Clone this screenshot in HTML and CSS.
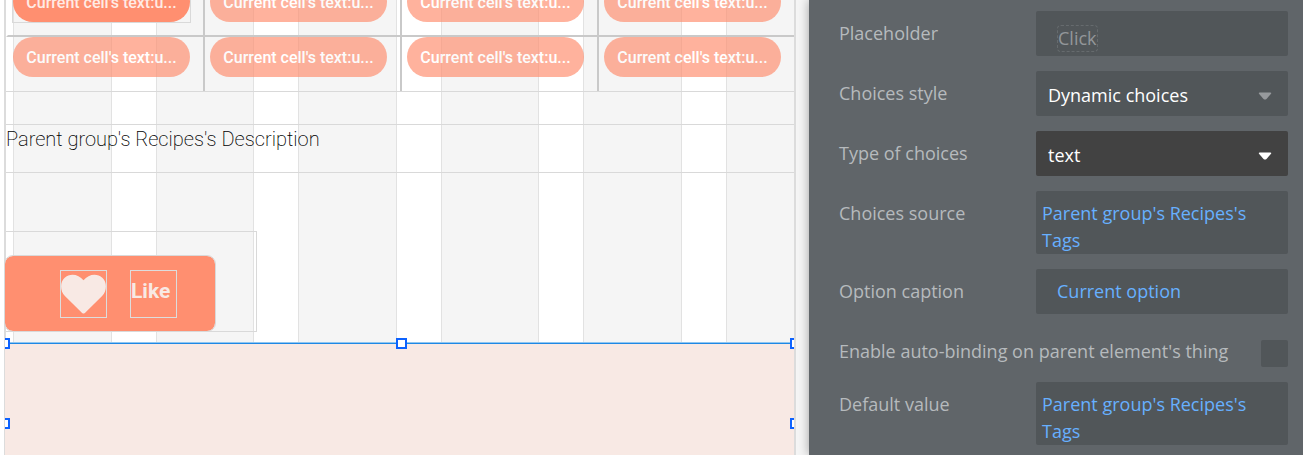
FILE: index.html
```html
<!DOCTYPE html>
<html lang="en">
<head>
<meta charset="utf-8">
<title>Editor</title>
<link rel="stylesheet" href="styles.css">
</head>
<body>
<div class="editor">
  <main class="canvas">
    <div class="columns"><i></i><i></i><i></i><i></i><i></i><i></i></div>
    <div class="artboard">
      <div class="cells">
        <div class="cell"><span class="pill pill-active">Current cell's text:u...</span></div>
        <div class="cell"><span class="pill">Current cell's text:u...</span></div>
        <div class="cell"><span class="pill">Current cell's text:u...</span></div>
        <div class="cell"><span class="pill">Current cell's text:u...</span></div>
        <div class="cell"><span class="pill">Current cell's text:u...</span></div>
        <div class="cell"><span class="pill">Current cell's text:u...</span></div>
        <div class="cell"><span class="pill">Current cell's text:u...</span></div>
        <div class="cell"><span class="pill">Current cell's text:u...</span></div>
      </div>
      <p class="description">Parent group's Recipes's Description</p>
      <div class="like-group">
        <button class="like" type="button">
          <span class="like-box"><svg viewBox="0 0 46 46" aria-hidden="true"><path d="M23 43.500C22 43.500 21.400 42.800 20.800 42.200L4 25.500C-1 20.500-1.200 11.500 3.500 7.200C9.500 1.700 18 3.500 23 9.500C28 3.500 36.500 1.700 42.500 7.200C47.200 11.500 47 20.500 42 25.500L25.200 42.200C24.600 42.800 24 43.500 23 43.500Z"/></svg></span>
          <span class="like-box">Like</span>
        </button>
      </div>
      <section class="selected">
        <i class="handle top left"></i><i class="handle top center"></i><i class="handle top right"></i>
        <i class="handle middle left"></i><i class="handle middle right"></i>
      </section>
    </div>
  </main>
  <aside class="panel">
    <div class="row"><label for="placeholder">Placeholder</label><button id="placeholder" class="field indented" type="button"><span class="hint">Click</span></button></div>
    <div class="row"><label for="style">Choices style</label>
      <div class="picker"><select id="style" class="field"><option>Dynamic choices</option></select><svg viewBox="0 0 14 8" aria-hidden="true"><path d="M1.500.5h11q1.200.3.500 1.300L8.500 7Q7 8 5.500 7L1 1.800Q.3.800 1.500.5z"/></svg></div></div>
    <div class="row"><label for="type">Type of choices</label>
      <div class="picker picker-active"><select id="type" class="field"><option>text</option></select><svg viewBox="0 0 14 8" aria-hidden="true"><path d="M1.500.5h11q1.200.3.500 1.300L8.500 7Q7 8 5.500 7L1 1.800Q.3.800 1.500.5z"/></svg></div></div>
    <div class="row"><label for="source">Choices source</label><button id="source" class="field expression" type="button">Parent group's Recipes's Tags</button></div>
    <div class="row"><label for="caption">Option caption</label><button id="caption" class="field expression single" type="button">Current option</button></div>
    <div class="row row-check"><label for="binding">Enable auto-binding on parent element's thing</label><input id="binding" class="check" type="checkbox"></div>
    <div class="row"><label for="default">Default value</label><button id="default" class="field expression" type="button">Parent group's Recipes's Tags</button></div>
  </aside>
</div>
</body>
</html>
```
FILE: styles.css
```css
* { box-sizing: border-box; }
body { margin: 0; overflow: hidden; }
.editor { display: flex; height: 100vh; overflow: hidden; }

.canvas {
  position: relative;
  flex: 1;
  min-width: 0;
  display: flex;
  overflow: hidden;
  padding: 0 13px 0 4px;
  background: #fff;
  font-family: Roboto, sans-serif;
}
.columns {
  position: absolute;
  inset: 0 -15px 0 13px;
  display: grid;
  grid-template-columns: repeat(6, 1fr);
  gap: 44px;
}
.columns i { background: #f5f5f5; border: solid #e2e2e2; border-width: 0 1px; }
.artboard {
  position: relative;
  flex: 1;
  min-width: 0;
  display: flex;
  flex-direction: column;
  border: solid #dcdcdc;
  border-width: 0 2px;
}
.cells {
  display: grid;
  grid-template-columns: repeat(4, 1fr);
  margin-top: -18px;
  border-bottom: 1px solid #d9d9d9;
}
.cell { height: 55px; padding: 0 13px 0 5px; border-left: 2px solid #c9c9c9; border-bottom: 2px solid #c9c9c9; }
.cell:nth-child(4n + 1) { border-left-color: transparent; }
.cell:nth-child(n + 5) { height: 54px; border-bottom: 0; }
.pill {
  display: block;
  height: 40px;
  border-radius: 20px;
  background: #ff8f70;
  color: #fff;
  font-size: 16px;
  font-weight: 500;
  line-height: 42px;
  text-align: center;
  white-space: nowrap;
  opacity: .68;
}
.pill-active { opacity: 1; color: #ffebe5; }
.cell:first-child { position: relative; }
.cell:first-child::after {
  content: "";
  position: absolute;
  inset: 0 12px 12px 4px;
  border: 1px solid #d9d9d9;
}
.description {
  height: 49px;
  margin: 32px 0 58px;
  border: solid #d9d9d9;
  border-width: 1px 0;
  color: #000;
  font-size: 20px;
  font-weight: 200;
  line-height: 28px;
}
.like-group {
  width: 251px;
  height: 101px;
  margin-bottom: 11px;
  padding-top: 24px;
  border: 1px solid #d9d9d9;
  border-left: 0;
}
.like {
  display: flex;
  align-items: center;
  gap: 23px;
  width: 210px;
  height: 75px;
  margin-left: -1px;
  padding: 0 0 0 55px;
  border: 0;
  border-radius: 8px;
  outline: 1px solid #d9d9d9;
  background: #ff8f70;
  color: #f8e9e4;
  font: 700 21px/41px Roboto, sans-serif;
  text-align: left;
}
.like-box { width: 47px; height: 48px; border: 1px solid #ddd; }
.like-box svg { display: block; fill: #f8e9e4; }
.selected {
  position: relative;
  flex: 1;
  margin-left: -1px;
  border-top: 1px solid #1e88e5;
  box-shadow: 0 -1px #91c6f0;
  background: #f8e9e4;
}
.handle { position: absolute; width: 11px; height: 11px; border: 2px solid #0d62fe; background: #fff; }
.top { top: -6px; }
.middle { top: 74px; }
.left { left: 0; width: 5px; border-left: 0; }
.center { left: calc(50% - 4px); }
.right { right: 0; width: 4px; border-right: 0; }

.panel {
  position: relative;
  flex: 0 0 494px;
  display: flex;
  flex-direction: column;
  gap: 15px;
  padding: 11px 15px 10px 30px;
  background: #606569;
  box-shadow: 0 0 10px rgba(0, 0, 0, .35);
  color: #b6babd;
  font: 18px/27px "Open Sans", sans-serif;
}
.row { display: grid; grid-template-columns: 1fr 252px; }
.row label { padding-top: 9px; }
.row-check { grid-template-columns: 1fr 27px; align-items: end; }
.row-check label { padding: 9px 0 2px; }
.field {
  width: 100%;
  min-height: 45px;
  padding: 9px 6px 0;
  border: 0;
  border-radius: 2px;
  background: #515659;
  color: #fff;
  font: inherit;
  text-align: left;
  display: block;
}
.expression { color: #67b0ff; }
.indented { padding-left: 21px; }
.single { padding: 0 21px; }
.hint { display: inline-block; border: 1px dashed #666b6e; border-radius: 4px; color: #939699; line-height: 25px; }
.picker { position: relative; }
.picker .field { height: 45px; padding: 4px 12px 0; appearance: none; font-weight: 500; }
.picker svg { position: absolute; right: 16px; top: 21px; width: 14px; height: 8px; fill: #96999c; }
.picker-active .field { background: #424242; }
.picker-active svg { fill: #fff; }
.check { appearance: none; width: 27px; height: 27px; margin: 0; border-radius: 2px; background: #515659; }
```
